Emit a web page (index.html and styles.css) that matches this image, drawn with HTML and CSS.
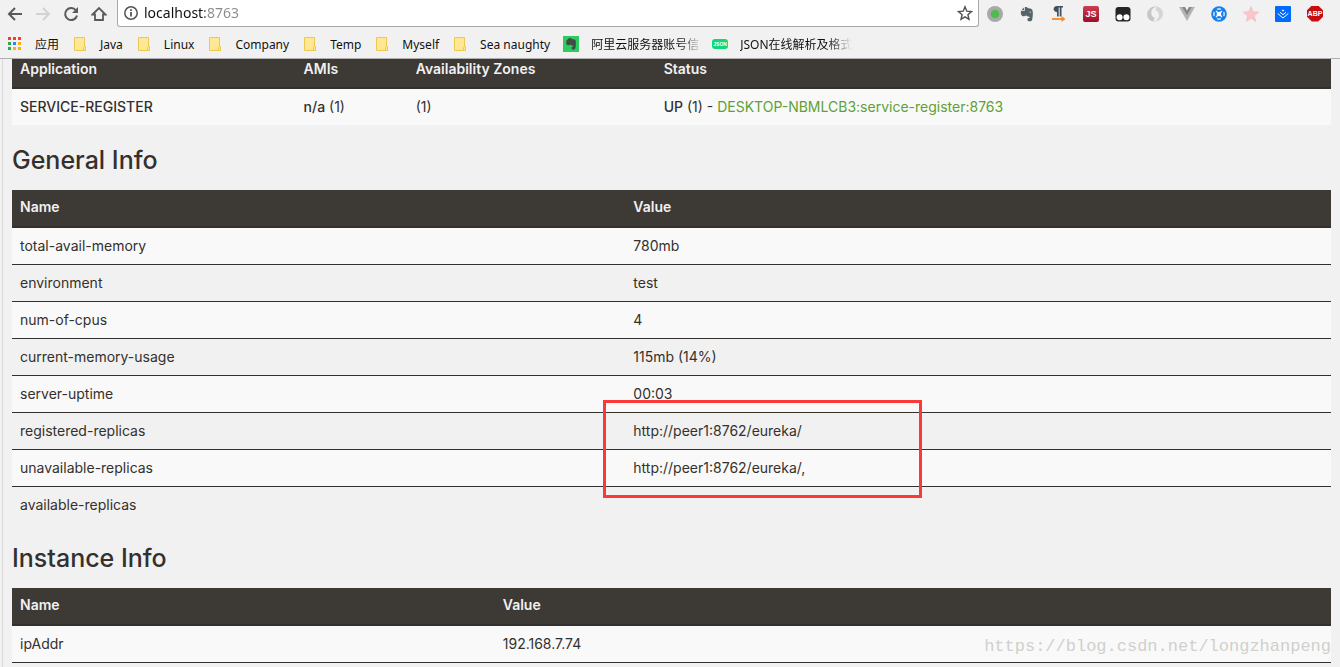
FILE: index.html
```html
<!DOCTYPE html>
<html lang="en">
<head>
<meta charset="utf-8">
<title>Eureka</title>
<link rel="stylesheet" href="styles.css">
</head>
<body>
<header class="chrome">
  <div class="toolbar">
    <nav class="nav-buttons">
      <button class="icon-button" aria-label="Back"><svg viewBox="0 0 16 16"><path d="M15 8H2M8 2L2 8l6 6" fill="none" stroke="#5a5a5a" stroke-width="2"/></svg></button>
      <button class="icon-button" aria-label="Forward"><svg viewBox="0 0 16 16"><path d="M1 8h13M8 2l6 6-6 6" fill="none" stroke="#d2d2d2" stroke-width="2"/></svg></button>
      <button class="icon-button" aria-label="Reload"><svg viewBox="0 0 16 16"><path d="M13 4.5A6 6 0 1 0 14 9.500" fill="none" stroke="#5a5a5a" stroke-width="2"/><path d="M15 1v6H9z" fill="#5a5a5a"/></svg></button>
      <button class="icon-button" aria-label="Home"><svg viewBox="0 0 16 16"><path d="M1.500 8.500L8 2l6.500 6.500H12V14H4V8.500z" fill="none" stroke="#5a5a5a" stroke-width="1.800"/></svg></button>
    </nav>
    <div class="omnibox">
      <svg class="icon" viewBox="0 0 16 16"><circle cx="8" cy="8" r="6.200" fill="none" stroke="#555" stroke-width="1.500"/><path d="M8 7v4.500M8 4.200v1.800" stroke="#555" stroke-width="1.800"/></svg>
      <input class="address" type="text" aria-label="Address" value="localhost:8763">
      <button class="star-button" aria-label="Bookmark this page"><svg viewBox="0 0 16 16"><path d="M8 1.800l1.800 4.400 4.700.4-3.600 3.100 1.100 4.600L8 11.800l-4 2.500 1.100-4.600L1.500 6.600l4.700-.4z" fill="none" stroke="#505050" stroke-width="1.400"/></svg></button>
    </div>
    <div class="extensions">
      <button class="ext" aria-label="Status"><svg viewBox="0 0 16 16"><circle cx="8" cy="8" r="8" fill="#a9a9a9"/><circle cx="8" cy="8" r="4.300" fill="#4dbb50"/></svg></button>
      <button class="ext" aria-label="Evernote"><svg viewBox="0 0 16 16"><path d="M5.500 1L2 4.500 1.800 7c.2 2 1 3 2.500 3.200 1.500 0 2.200-.4 2.700-1 .7 1 1.700 1.100 2.800 1.300.7.200 1 .7.800 1.500H9c-.8.500-.8 2.800.3 3.200h2.200c1.300-.2 1.600-1 1.800-2.200.6-3 .8-6 .2-8.500C13.200 3 12 2.600 9.500 2.300 8 1 7 .8 5.500 1z" fill="#546467"/><path d="M2 4.500h3.500V1M10.500 6.300q1-.8 1.700.3" fill="none" stroke="#f1f1f1" stroke-width=".8"/></svg></button>
      <button class="ext" aria-label="Paragraph"><svg viewBox="0 0 16 16"><path d="M12 0H6C1.500 0 1.500 6 6 6v4.500h1.700v-9h1v9h1.800v-9H12z" fill="#3f525c"/><path d="M1 13h11" stroke="#f58a1e" stroke-width="1.800"/><path d="M10.500 10l4 3-4 3z" fill="#f58a1e"/></svg></button>
      <button class="ext ext-js" aria-label="JavaScript">JS</button>
      <button class="ext" aria-label="Tampermonkey"><svg viewBox="0 0 16 16"><rect x=".5" y="1" width="15" height="14.500" rx="3" fill="#252525"/><circle cx="4.600" cy="11.300" r="3" fill="#fff"/><circle cx="11.400" cy="11.300" r="3" fill="#fff"/></svg></button>
      <button class="ext" aria-label="JSON viewer"><svg viewBox="0 0 16 16"><path d="M7 15.500C0 15-2 7 2.500 3 4.500 1 7 .2 9.500.8 6 1.500 3.800 4 4.300 7.500 4.600 10 6 11.600 8 11.800 6.800 13 6.500 14.300 7 15.500z" fill="#c6c6c6"/><path d="M9 .5c7 .5 9 8 4.500 12.500-2 2-4.200 2.700-6.500 2.300 3.500-.8 5.500-3.500 5-7C11.700 5.800 10.300 4.400 8 4.200 9.200 3 9.500 1.700 9 .5z" fill="#d4d4d4"/></svg></button>
      <button class="ext" aria-label="Vue devtools"><svg viewBox="0 0 16 16"><path d="M0 1h4l4 7 4-7h4L8 15z" fill="#b4b4b4"/><path d="M3.200 1H6l2 3.500L10 1h2.800L8 9.300z" fill="#858585"/></svg></button>
      <button class="ext" aria-label="Blue tool"><svg viewBox="0 0 16 16"><circle cx="8" cy="8" r="7.800" fill="#147ff0"/><path d="M6 3.200q2-.7 4 0M6 12.800q2 .7 4 0M3.200 6q-.7 2 0 4M12.800 6q.7 2 0 4" fill="none" stroke="#fff" stroke-width="1.200"/><path d="M5 5l6 6M11 5l-6 6" stroke="#fff" stroke-width="1.300"/><circle cx="8" cy="8" r="2.300" fill="#fff"/></svg></button>
      <button class="ext" aria-label="Star"><svg viewBox="0 0 16 16"><path d="M8 .5l2 5.200 5.700.4-4.400 3.700 1.500 5.700L8 12.300l-4.800 3.200 1.500-5.700L.3 6.100 6 5.700z" fill="#f9c6cb" stroke="#f0b8b6" stroke-width=".6"/></svg></button>
      <button class="ext" aria-label="Juejin"><svg viewBox="0 0 16 16"><rect width="16" height="16" rx="1" fill="#006cff"/><path d="M2.700 7.500L8 12l5.300-4.500M4.900 6.200L8 8.700l3.100-2.500" fill="none" stroke="#fff" stroke-width="1"/><path d="M8 3.400l1.300 1.100L8 5.600 6.700 4.500z" fill="#fff"/></svg></button>
      <button class="ext ext-abp" aria-label="Adblock Plus">ABP</button>
    </div>
  </div>
  <nav class="bookmarks">
    <a class="bookmark" href="#"><svg class="icon" viewBox="0 0 16 16"><path d="M1 1h3v3H1zM6 1h3v3H6z" fill="#ea4335"/><path d="M11 1h3v3h-3z" fill="#ea4335"/><path d="M1 6h3v3H1z" fill="#2fa556"/><path d="M6 6h3v3H6z" fill="#3583f2"/><path d="M11 6h3v3h-3zM6 11h3v3H6zM11 11h3v3h-3z" fill="#f9b20c"/><path d="M1 11h3v3H1z" fill="#2fa556"/></svg><span>应用</span></a>
    <a class="bookmark" href="#"><svg class="icon" viewBox="0 0 16 16"><use href="#folder"/></svg><span>Java</span></a>
    <a class="bookmark" href="#"><svg class="icon" viewBox="0 0 16 16"><use href="#folder"/></svg><span>Linux</span></a>
    <a class="bookmark" href="#"><svg class="icon" viewBox="0 0 16 16"><use href="#folder"/></svg><span>Company</span></a>
    <a class="bookmark" href="#"><svg class="icon" viewBox="0 0 16 16"><use href="#folder"/></svg><span>Temp</span></a>
    <a class="bookmark" href="#"><svg class="icon" viewBox="0 0 16 16"><use href="#folder"/></svg><span>Myself</span></a>
    <a class="bookmark" href="#"><svg class="icon" viewBox="0 0 16 16"><use href="#folder"/></svg><span>Sea naughty</span></a>
    <a class="bookmark" href="#"><svg class="icon" viewBox="0 0 16 16"><rect width="16" height="16" fill="#2dcc5f"/><path d="M6 2L3.300 4.700 3.200 7c.3 1.600 1 2.200 2.200 2.200 1 0 1.600-.3 2-.8.6.9 1.500.9 2.300 1 .5.300.7.700.5 1.300H9c-.7.700-.5 2.600.4 2.800h1.500c1.200-.2 1.500-1.200 1.700-2.500.3-2.300.5-4.500 0-6.600-.4-1-1.500-1.200-3.500-1.400C8 2 7.200 1.800 6 2z" fill="#434a48"/></svg><span class="faded">阿里云服务器账号信</span></a>
    <a class="bookmark" href="#"><span class="json-icon">JSON</span><span class="faded">JSON在线解析及格式</span></a>
  </nav>
  <svg class="symbols" aria-hidden="true"><defs><g id="folder"><path d="M2.500 1.500h10v9h1v4h-11z" fill="#ffe793" stroke="#ebc850"/><path d="M11.500 14.500v-3l1-1 1 1v3z" fill="#ffe793" stroke="#ebc850"/></g></defs></svg>
</header>
<main class="page">
  <table class="grid instances">
    <thead><tr><th>Application</th><th>AMIs</th><th>Availability Zones</th><th>Status</th></tr></thead>
    <tbody><tr><td><b>SERVICE-REGISTER</b></td><td><b>n/a</b> (1)</td><td>(1)</td><td><b>UP</b> (1) - <a class="instance" href="#">DESKTOP-NBMLCB3:service-register:8763</a></td></tr></tbody>
  </table>
  <h1>General Info</h1>
  <table class="grid general">
    <thead><tr><th>Name</th><th>Value</th></tr></thead>
    <tbody>
      <tr><td>total-avail-memory</td><td>780mb</td></tr>
      <tr><td>environment</td><td>test</td></tr>
      <tr><td>num-of-cpus</td><td>4</td></tr>
      <tr><td>current-memory-usage</td><td>115mb (14%)</td></tr>
      <tr><td>server-uptime</td><td>00:03</td></tr>
      <tr><td>registered-replicas</td><td>http://peer1:8762/eureka/</td></tr>
      <tr><td>unavailable-replicas</td><td>http://peer1:8762/eureka/,</td></tr>
      <tr><td>available-replicas</td><td></td></tr>
    </tbody>
  </table>
  <h1>Instance Info</h1>
  <table class="grid instance-info">
    <thead><tr><th>Name</th><th>Value</th></tr></thead>
    <tbody>
      <tr><td>ipAddr</td><td>192.168.7.74</td></tr>
      <tr><td></td><td></td></tr>
    </tbody>
  </table>
  <div class="highlight"></div>
  <div class="watermark">https://blog.csdn.net/longzhanpeng</div>
</main>
</body>
</html>
```
FILE: styles.css
```css
* { box-sizing: border-box; }

body {
  margin: 0;
  height: 100vh;
  display: flex;
  flex-direction: column;
  overflow: hidden;
  background: #f1f1f1;
  color: #34302d;
  font: 14px/20px Inter, "Noto Sans", sans-serif;
}

button {
  padding: 0;
  border: 0;
  background: none;
}

.chrome {
  flex: none;
  border-bottom: 1px solid #b0aeae;
  background: #f1f1f1;
}

.toolbar {
  display: flex;
  height: 27px;
}

.nav-buttons {
  display: flex;
  padding-left: 1px;
}

.icon-button {
  display: flex;
  align-items: center;
  justify-content: center;
  width: 28px;
}

.icon-button svg,
.star-button svg,
.ext svg,
.icon {
  display: block;
  flex: none;
  width: 16px;
  height: 16px;
}

.omnibox {
  flex: 1;
  display: flex;
  align-items: center;
  gap: 5px;
  margin-left: 4px;
  padding: 0 5px;
  border: 1px solid #a9a9a9;
  border-top: 0;
  border-radius: 0 0 3px 3px;
  background: #fff;
}

.address {
  flex: 1;
  height: 20px;
  padding: 0;
  border: 0;
  outline: 0;
  background: linear-gradient(90deg, #111 61px, #8a8a8a 61px);
  background-clip: text;
  color: transparent;
  font: 14px/20px "Noto Sans", sans-serif;
}

.extensions {
  display: flex;
  align-items: center;
  gap: 16px;
  padding: 0 17px 0 8px;
}

.ext {
  flex: none;
  width: 16px;
  height: 16px;
}

.ext-js {
  border-radius: 2px;
  background: linear-gradient(#ce3e52, #9d0d26);
  color: #fff;
  font: bold 9px/16px "Liberation Sans", sans-serif;
}

.ext-abp {
  background: #c70d0d;
  clip-path: polygon(30% 0, 70% 0, 100% 30%, 100% 70%, 70% 100%, 30% 100%, 0 70%, 0 30%);
  color: #fff;
  font: bold 7px/16px "Liberation Sans", sans-serif;
}

.bookmarks {
  display: flex;
  align-items: center;
  gap: 13px;
  height: 31px;
  padding: 3px 7px 0;
}

.bookmark {
  display: flex;
  align-items: center;
  gap: 12px;
  color: #111;
  font: 12px/18px "Noto Sans", "Noto Sans CJK SC", sans-serif;
  text-decoration: none;
  white-space: nowrap;
}

.bookmark span { padding-top: 1px; }

.faded {
  mask-image: linear-gradient(90deg, #000 88px, transparent 112px);
}

.bookmark .json-icon {
  width: 16px;
  padding: 0;
  border-radius: 3px;
  background: #11d779;
  color: #fff;
  font: bold 5px/10px "Liberation Sans", sans-serif;
  text-align: center;
}

.symbols {
  position: absolute;
  width: 0;
  height: 0;
}

.page {
  position: relative;
  flex: 1;
  min-height: 0;
  overflow: hidden;
  margin-left: 2px;
  padding: 0 9px;
  border-left: 1px solid #d9d9d9;
}

.grid {
  width: 100%;
  table-layout: fixed;
  border-collapse: separate;
  border-spacing: 0;
  text-align: left;
}

.grid th {
  padding: 7px 8px 9px;
  height: 38px;
  border-bottom: 2px solid #34302d;
  background: #3d3935;
  color: #f1f1f1;
  font-weight: 600;
  line-height: 20px;
}

.instances th {
  height: 30px;
  padding-top: 0;
  padding-bottom: 8px;
}

.grid td {
  height: 37px;
  padding: 8px;
  border-bottom: 1px solid #34302d;
}

.grid tr:last-child td {
  height: 36px;
  border-bottom: 0;
}

.grid tbody tr:nth-child(odd) td { background: #f9f9f9; }

.grid b { font-weight: 500; }

.instances th:nth-child(1) { width: 21.5%; }
.instances th:nth-child(2) { width: 8.5%; }
.instances th:nth-child(3) { width: 18.8%; }
.general th:first-child { width: 46.5%; }
.instance-info th:first-child { width: 36.6%; }

.instance { color: #5fa134; text-decoration: none; }

h1 {
  margin: 0;
  padding: 20px 0 15px;
  font: 500 25px/30px Inter, "Noto Sans", sans-serif;
}

.highlight {
  position: absolute;
  left: 600px;
  top: 341px;
  width: 319px;
  height: 98px;
  border: 3px solid #fb3939;
}

.watermark {
  position: absolute;
  right: 9px;
  bottom: 9px;
  color: #d0d0cd;
  font: 17px/22px "Liberation Mono", monospace;
}
```
